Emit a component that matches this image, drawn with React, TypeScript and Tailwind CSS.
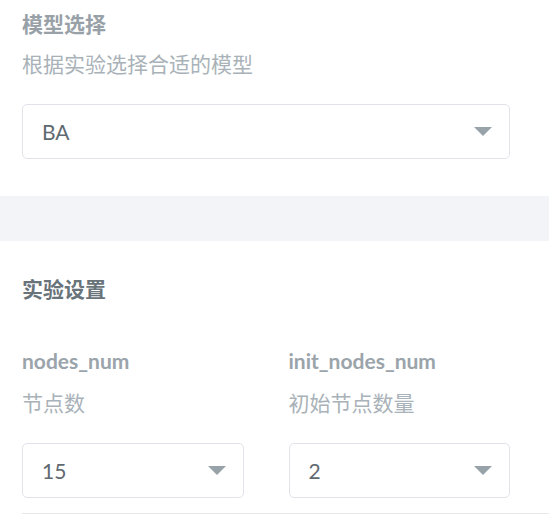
// Model and experiment settings form: two sections split by a grey band.

const FONT = "font-['Lato','Noto_Sans_CJK_SC',sans-serif]"

function Select({ value }: { value: string }) {
  return (
    <div className="flex h-[55px] items-center justify-between rounded-[5px] border border-[#e1e3e8] bg-white pl-[19px] pr-[17px]">
      <span className="text-[21px] text-[#5f6971]">{value}</span>
      <svg width="18" height="9" viewBox="0 0 18 9" className="shrink-0">
        <path d="M0 0 H18 L9 9 Z" fill="#98a3a9" />
      </svg>
    </div>
  )
}

function Field({ name, label, value }: { name: string; label: string; value: string }) {
  return (
    <div className="flex flex-col">
      <div className="h-[28px] text-[21px] leading-[28px] font-bold text-[#9aa4aa]">{name}</div>
      <div className="mt-[14px] h-[28px] text-[21px] leading-[28px] text-[#a9b2b8]">{label}</div>
      <div className="mt-[26px]">
        <Select value={value} />
      </div>
    </div>
  )
}

export default function App() {
  return (
    <div className={`${FONT} h-[526px] w-[549px] overflow-hidden bg-white`}>
      <section className="px-[22px] pt-[10px] pb-[37px] pr-[39px]">
        <div className="h-[28px] text-[21px] leading-[28px] font-bold text-[#98a1a7]">模型选择</div>
        <div className="mt-[12px] h-[28px] text-[21px] leading-[28px] text-[#a9b2b8]">
          根据实验选择合适的模型
        </div>
        <div className="mt-[26px]">
          <Select value="BA" />
        </div>
      </section>

      <div className="h-[45px] bg-[#f3f4f8]" />

      <section className="pt-[34px]">
        <div className="px-[22px] h-[28px] text-[21px] leading-[28px] font-bold text-[#69737a]">实验设置</div>
        <div className="mt-[44px] grid w-[510px] grid-cols-2 gap-[45px] pl-[22px]">
          <Field name="nodes_num" label="节点数" value="15" />
          <Field name="init_nodes_num" label="初始节点数量" value="2" />
        </div>
        <div className="ml-[22px] mt-[15px] border-t border-[#e6e8ec]" />
      </section>
    </div>
  )
}
